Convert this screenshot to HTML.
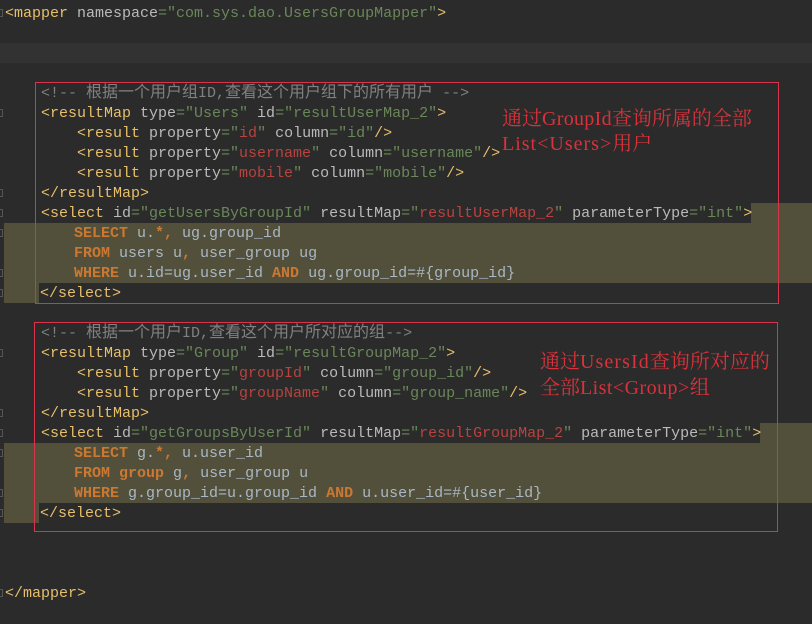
<!DOCTYPE html>
<html>
<head>
<meta charset="utf-8">
<style>
html,body{margin:0;padding:0;background:#2b2b2b}
#p{position:relative;width:812px;height:624px;overflow:hidden;background:#2b2b2b}
.l{position:absolute;white-space:pre;font:15px/20px "Liberation Mono",monospace;color:#bababa;height:20px;margin-top:1px}
.t{color:#e8bf6a}.s{color:#6a8759}.r{color:#b8433f}.c{color:#808080}
.k{color:#cc7832;font-weight:bold}.x{color:#a9b7c6}
.c i{font:normal 16px/0 "Noto Sans CJK SC",sans-serif;}
.h,.b,.g{position:absolute}
.h{background:#52503a}
.b{border:1px solid #d9344c;box-sizing:border-box}
.g{width:4px;height:8px;border:1px solid #555;box-sizing:border-box;left:-1px}
.a{position:absolute;white-space:pre;font:20px/26px "Noto Serif CJK SC",serif;color:#d8323a;height:26px}
.a span{font:20px/0 "Liberation Serif",serif}
</style>
</head>
<body>
<div id="p">
<div class="h" style="left:0;top:43px;width:812px;height:20px;background:#323232"></div>
<div class="h" style="left:751px;top:203px;width:61px;height:20px"></div>
<div class="h" style="left:4px;top:223px;width:808px;height:60px"></div>
<div class="h" style="left:4px;top:283px;width:35px;height:20px"></div>
<div class="h" style="left:760px;top:423px;width:52px;height:20px"></div>
<div class="h" style="left:4px;top:443px;width:808px;height:60px"></div>
<div class="h" style="left:4px;top:503px;width:35px;height:20px"></div>

<div class="g" style="top:109px"></div><div class="g" style="top:189px"></div><div class="g" style="top:209px"></div><div class="g" style="top:229px"></div><div class="g" style="top:269px"></div><div class="g" style="top:289px"></div><div class="g" style="top:349px"></div><div class="g" style="top:409px"></div><div class="g" style="top:429px"></div><div class="g" style="top:449px"></div><div class="g" style="top:489px"></div><div class="g" style="top:509px"></div><div class="g" style="top:9px"></div><div class="g" style="top:589px"></div>

<div class="l" style="left:5px;top:-17px"><span class="s">        "http://mybatis.org/dtd/mybatis-3-mapper.dtd"&gt;</span></div>
<div class="l" style="left:5px;top:3px"><span class="t">&lt;mapper</span> namespace<span class="s">="com.sys.dao.UsersGroupMapper"</span><span class="t">&gt;</span></div>

<div class="l c" style="left:41px;top:83px">&lt;!-- <i>根据一个用户组</i>ID,<i>查看这个用户组下的所有用户</i> --&gt;</div>
<div class="l" style="left:41px;top:103px"><span class="t">&lt;resultMap</span> type<span class="s">="Users"</span> id<span class="s">="resultUserMap_2"</span><span class="t">&gt;</span></div>
<div class="l" style="left:77px;top:123px"><span class="t">&lt;result</span> property<span class="s">="</span><span class="r">id</span><span class="s">"</span> column<span class="s">="id"</span><span class="t">/&gt;</span></div>
<div class="l" style="left:77px;top:143px"><span class="t">&lt;result</span> property<span class="s">="</span><span class="r">username</span><span class="s">"</span> column<span class="s">="username"</span><span class="t">/&gt;</span></div>
<div class="l" style="left:77px;top:163px"><span class="t">&lt;result</span> property<span class="s">="</span><span class="r">mobile</span><span class="s">"</span> column<span class="s">="mobile"</span><span class="t">/&gt;</span></div>
<div class="l" style="left:41px;top:183px"><span class="t">&lt;/resultMap&gt;</span></div>
<div class="l" style="left:41px;top:203px"><span class="t">&lt;select</span> id<span class="s">="getUsersByGroupId"</span> resultMap<span class="s">="</span><span class="r">resultUserMap_2</span><span class="s">"</span> parameterType<span class="s">="int"</span><span class="t">&gt;</span></div>
<div class="l x" style="left:74px;top:223px"><span class="k">SELECT</span> u.<span class="k">*,</span> ug.group_id</div>
<div class="l x" style="left:74px;top:243px"><span class="k">FROM</span> users u<span class="k">,</span> user_group ug</div>
<div class="l x" style="left:74px;top:263px"><span class="k">WHERE</span> u.id=ug.user_id <span class="k">AND</span> ug.group_id=#{group_id}</div>
<div class="l" style="left:40px;top:283px"><span class="t">&lt;/select&gt;</span></div>

<div class="l c" style="left:41px;top:323px">&lt;!-- <i>根据一个用户</i>ID,<i>查看这个用户所对应的组</i>--&gt;</div>
<div class="l" style="left:41px;top:343px"><span class="t">&lt;resultMap</span> type<span class="s">="Group"</span> id<span class="s">="resultGroupMap_2"</span><span class="t">&gt;</span></div>
<div class="l" style="left:77px;top:363px"><span class="t">&lt;result</span> property<span class="s">="</span><span class="r">groupId</span><span class="s">"</span> column<span class="s">="group_id"</span><span class="t">/&gt;</span></div>
<div class="l" style="left:77px;top:383px"><span class="t">&lt;result</span> property<span class="s">="</span><span class="r">groupName</span><span class="s">"</span> column<span class="s">="group_name"</span><span class="t">/&gt;</span></div>
<div class="l" style="left:41px;top:403px"><span class="t">&lt;/resultMap&gt;</span></div>
<div class="l" style="left:41px;top:423px"><span class="t">&lt;select</span> id<span class="s">="getGroupsByUserId"</span> resultMap<span class="s">="</span><span class="r">resultGroupMap_2</span><span class="s">"</span> parameterType<span class="s">="int"</span><span class="t">&gt;</span></div>
<div class="l x" style="left:74px;top:443px"><span class="k">SELECT</span> g.<span class="k">*,</span> u.user_id</div>
<div class="l x" style="left:74px;top:463px"><span class="k">FROM</span> <span class="k">group</span> g<span class="k">,</span> user_group u</div>
<div class="l x" style="left:74px;top:483px"><span class="k">WHERE</span> g.group_id=u.group_id <span class="k">AND</span> u.user_id=#{user_id}</div>
<div class="l" style="left:40px;top:503px"><span class="t">&lt;/select&gt;</span></div>

<div class="l" style="left:5px;top:583px"><span class="t">&lt;/mapper&gt;</span></div>

<div class="b" style="left:35px;top:82px;width:744px;height:222px"></div>
<div class="b" style="left:34px;top:322px;width:744px;height:210px"></div>

<div class="a" style="left:502px;top:104px">通过<span style="letter-spacing:.3px">GroupId</span>查询所属的全部</div>
<div class="a" style="left:502px;top:129px"><span style="letter-spacing:1px">List&lt;Users&gt;</span>用户</div>
<div class="a" style="left:540px;top:347px">通过<span style="letter-spacing:1.1px">UsersId</span>查询所对应的</div>
<div class="a" style="left:540px;top:373px">全部<span style="letter-spacing:.45px">List&lt;Group&gt;</span>组</div>
</div>
</body>
</html>
